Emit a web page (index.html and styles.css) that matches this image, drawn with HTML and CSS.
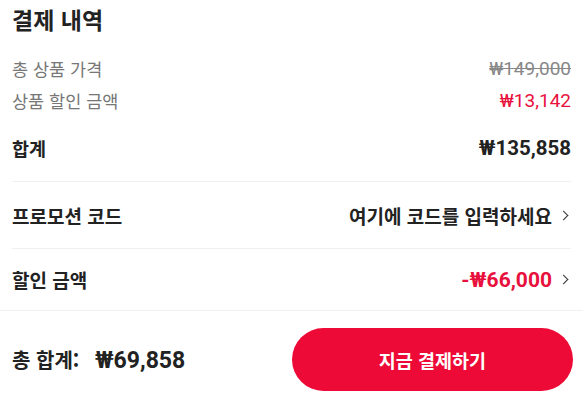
FILE: index.html
```html
<!DOCTYPE html>
<html lang="ko">
<head>
    <meta charset="utf-8">
    <title>결제 내역</title>
    <link rel="stylesheet" href="styles.css">
</head>
<body>

    <div class="summary">
        <h2 class="title">결제 내역</h2>

        <div class="row sub">
            <span>총 상품 가격</span>
            <span class="price old">₩149,000</span>
        </div>
        <div class="row sub">
            <span>상품 할인 금액</span>
            <span class="price red">₩13,142</span>
        </div>

        <div class="row total">
            <span>합계</span>
            <span class="price">₩135,858</span>
        </div>

        <div class="row link">
            <span>프로모션 코드</span>
            <span class="value">여기에 코드를 입력하세요 <i class="chev"></i></span>
        </div>

        <div class="row link">
            <span>할인 금액</span>
            <span class="value price red">-₩66,000 <i class="chev"></i></span>
        </div>
    </div>

    <div class="checkout">
        <div class="grand">총 합계: <span class="price">₩69,858</span></div>
        <a href="#" class="pay">지금 결제하기</a>
    </div>

</body>
</html>
```

FILE: styles.css
```css
body{
	margin: 0;
	width: 583px;
	height: 404px;
	background: #fff;
	color: #222;
	font-family: "Noto Sans CJK KR", sans-serif;
	overflow: hidden;
}

.summary{
	padding: 0 12px;
}

.title{
	margin: 0;
	font-size: 23px;
	font-weight: 700;
	line-height: 38px;
	margin-bottom: 14px;
}

.row{
	display: flex;
	justify-content: space-between;
	align-items: center;
}

.price{
	font-family: Roboto, "Noto Sans CJK KR", sans-serif;
}

.sub{
	height: 32px;
	font-size: 17.5px;
	color: #777;
}

.sub .price{
	font-size: 19px;
}

.old{
	color: #888;
	text-decoration: line-through;
}

.red{
	color: #e8103c;
}

.total{
	height: 32px;
	margin-top: 16px;
	padding-bottom: 17px;
	border-bottom: 1px solid #f0f0f0;
	font-size: 18.5px;
	font-weight: 700;
}

.total .price{
	font-size: 20.5px;
}

.link{
	height: 66px;
	font-size: 19px;
	font-weight: 700;
	border-bottom: 1px solid #f0f0f0;
}

.link:last-child{
	height: 61px;
	border-bottom: none;
}

.link .price{
	font-size: 21px;
}

.value{
	display: flex;
	align-items: center;
	gap: 6px;
}

.chev{
	display: inline-block;
	width: 6px;
	height: 6px;
	border-right: 1.6px solid #333;
	border-top: 1.6px solid #333;
	transform: rotate(45deg);
	margin: 0 4px 0 2px;
}

.checkout{
	border-top: 1px solid #f0f0f0;
	display: flex;
	justify-content: space-between;
	align-items: center;
	padding: 17px 10px 13px 12px;
}

.grand{
	font-size: 20px;
	font-weight: 700;
}

.grand .price{
	font-size: 23px;
	margin-left: 10px;
}

.pay{
	display: flex;
	align-items: center;
	justify-content: center;
	width: 281px;
	height: 63px;
	border-radius: 32px;
	background: #ee0a37;
	color: #fff;
	font-size: 18.5px;
	font-weight: 700;
	text-decoration: none;
}
```
